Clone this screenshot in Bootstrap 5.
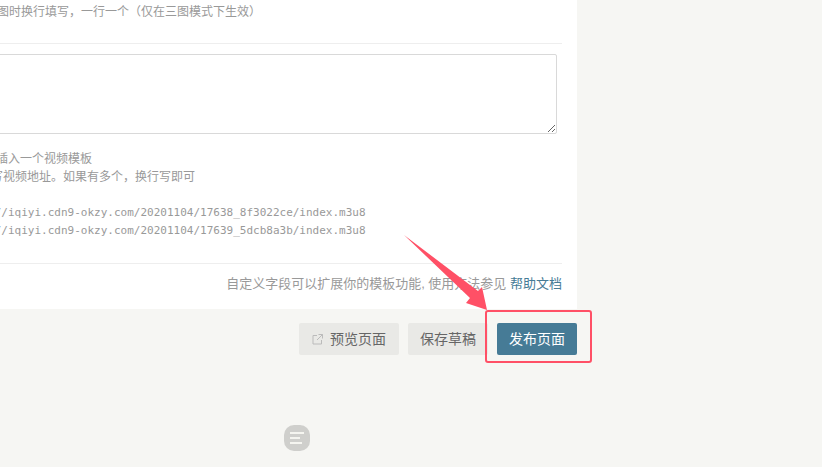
<!DOCTYPE html>
<html lang="zh"><head><meta charset="utf-8"><title>发布页面</title>
<link href="https://cdn.jsdelivr.net/npm/bootstrap@5.3.0/dist/css/bootstrap.min.css" rel="stylesheet">
<style>
html,body{height:467px;overflow:hidden;background:#f6f6f3}
body{font-family:"Liberation Sans","Noto Sans CJK SC",sans-serif;position:relative;font-size:13px;color:#999}
.pane{margin-left:-60px;width:637px;height:309px;background:#fff;padding:0 15px 0 15px;box-sizing:border-box}
.tip{line-height:18px;color:#999;font-size:12px}
.first{height:44px;padding-top:3px;padding-left:6px;border-bottom:1px solid #eee}
.ta{display:block;height:80px;margin:10px 0 0;border:1px solid #d9d9d9;border-radius:2px;width:calc(100% - 5px)}
.ta:focus{box-shadow:none;border-color:#d9d9d9}
.help{margin-top:16px;line-height:18px;font-size:12px;height:114px;border-bottom:1px solid #eee}
.help .shift{padding-left:5px}
.help code{display:block;font-family:"DejaVu Sans Mono",monospace;font-size:11px;color:#999;line-height:18px}
.code-gap{height:18px}
.foot{padding-top:11px;line-height:18px;color:#999;font-size:13px}
.foot a{color:#467b96;text-decoration:none}
.acts{gap:9px;margin-top:14px;margin-right:245px}
.act{width:100px;height:32px;padding:0;border:0;border-radius:2px;background:#e9e9e6;color:#666;font-size:14px}
.act.w80{width:80px}
.act.pub{background:#467b96;color:#fff}
.act svg{margin-right:3px;vertical-align:-1px}
.mark-box{position:absolute;left:485px;top:310px;width:107px;height:53px;border:2px solid #ff5066;border-radius:3px}
.arrow{position:absolute;left:400px;top:230px}
.fab{position:absolute;left:284px;top:425px;width:26px;height:26px;border-radius:10px;background:#cfcfcc;display:flex;align-items:center;justify-content:center}
</style></head><body>
<div class="pane">
  <div class="tip first">如需多图时换行填写，一行一个（仅在三图模式下生效）</div>
  <textarea class="form-control ta" aria-label="自定义字段"></textarea>
  <div class="help">
    <div class="shift">请在此插入一个视频模板</div>
    <div>这里填写视频地址。如果有多个，换行写即可</div>
    <div class="code-gap"></div>
    <code>https://iqiyi.cdn9-okzy.com/20201104/17638_8f3022ce/index.m3u8</code>
    <code>https://iqiyi.cdn9-okzy.com/20201104/17639_5dcb8a3b/index.m3u8</code>
  </div>
  <div class="foot text-end">自定义字段可以扩展你的模板功能, 使用方法参见 <a href="#">帮助文档</a></div>
</div>
<div class="d-flex justify-content-end acts">
  <button class="act" type="button"><svg width="11" height="11" viewBox="0 0 11 11" fill="none" stroke="#bbb" stroke-width="1"><path d="M5 1.500H1v8.500h8.500V6M6.500.5h4v4M10.500.5 5 6"/></svg> 预览页面</button>
  <button class="act w80" type="button">保存草稿</button>
  <button class="act w80 pub" type="button">发布页面</button>
</div>
<svg class="arrow" width="92" height="84" viewBox="0 0 92 84"><polygon points="4,5 70,68 66,73 87,80 82,57 78,61" fill="#ff5066"/></svg>
<div class="mark-box"></div>
<div class="fab"><svg width="14" height="12" viewBox="0 0 14 12" fill="#f5f5f0"><rect x="0" y="0" width="14" height="2"/><rect x="0" y="5" width="10" height="2"/><rect x="0" y="10" width="12" height="2"/></svg></div>
</body></html>
